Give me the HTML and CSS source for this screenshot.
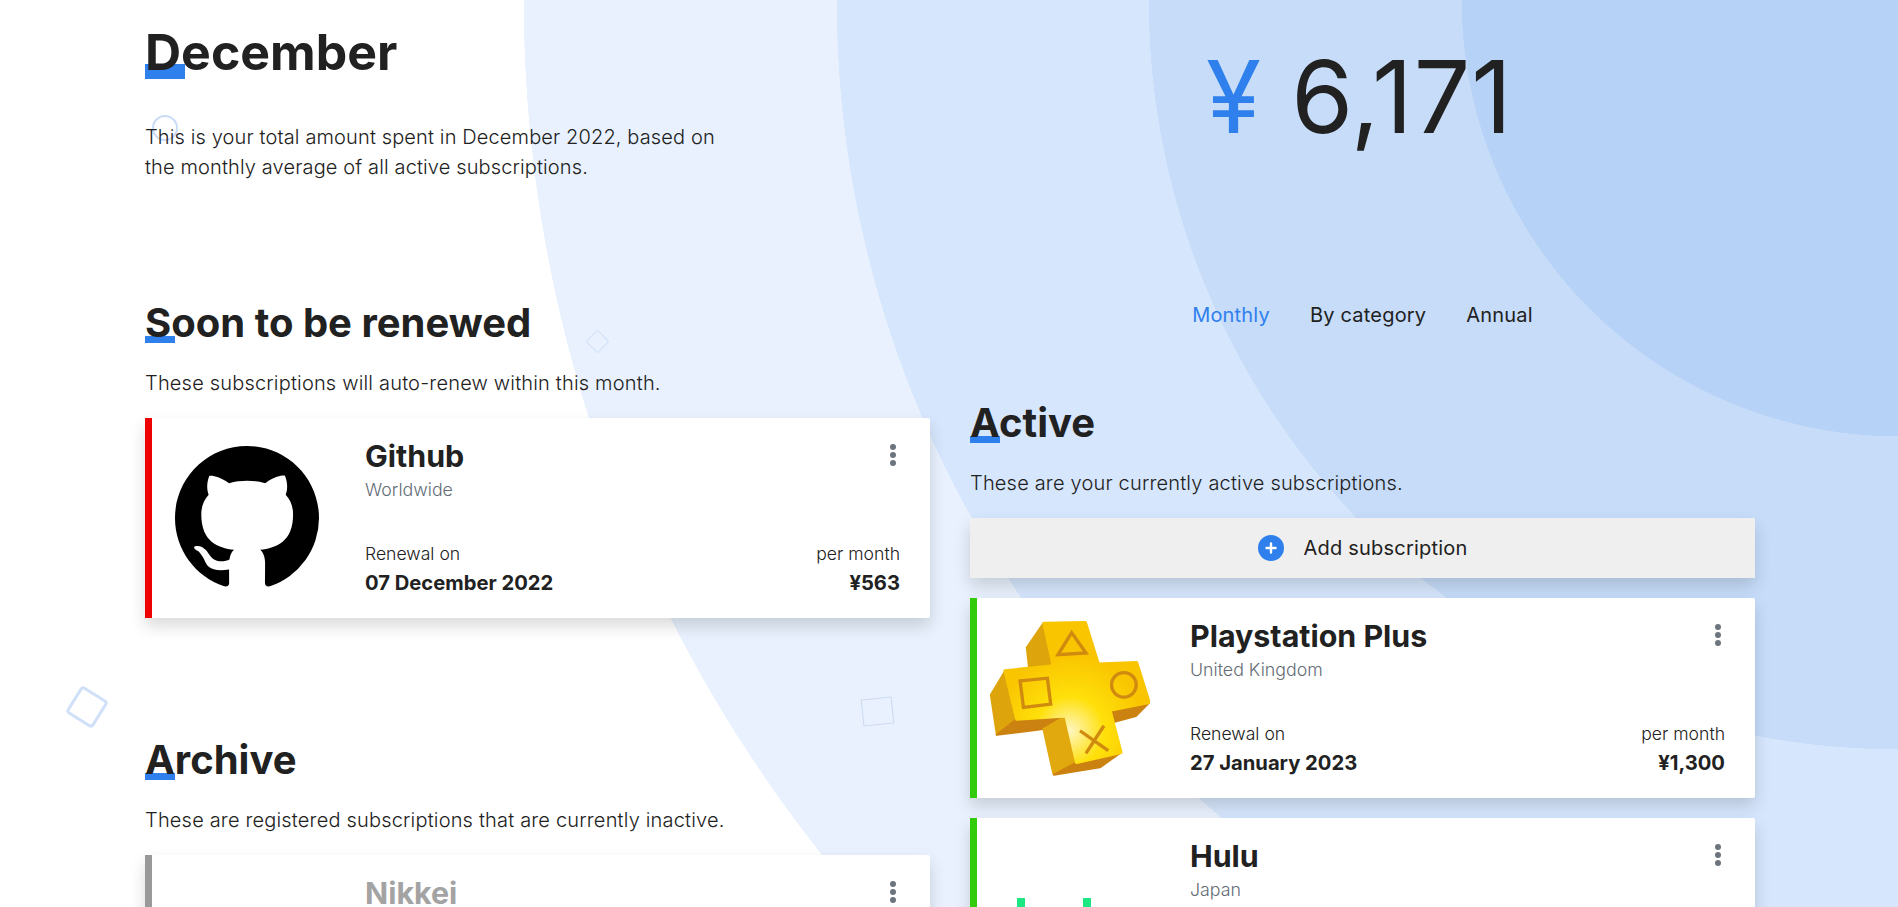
FILE: index.html
```html
<!DOCTYPE html>
<html lang="en">

<head>
    <meta charset="UTF-8">
    <meta name="viewport" content="width=device-width, initial-scale=1.0">
    <title>Subscriptions</title>
    <link rel="stylesheet" href="styles.css">
</head>

<body>
    <!-- floating shapes behind the content -->
    <span class="shape shape-circle"></span>
    <span class="shape shape-diamond"></span>
    <span class="shape shape-round"></span>
    <span class="shape shape-square"></span>

    <main class="page">
        <div class="col">
            <section class="hero">
                <h1 class="mark">December</h1>
                <p class="lead">This is your total amount spent in December 2022, based on the monthly average of all active subscriptions.</p>
            </section>

            <section class="renew">
                <h2 class="mark">Soon to be renewed</h2>
                <p class="sub">These subscriptions will auto-renew within this month.</p>
                <article class="card card-red">
                    <div class="logo">
                        <svg class="logo-github" viewBox="0 0 16 16" fill="#000">
                            <path d="M8 0C3.58 0 0 3.58 0 8c0 3.54 2.29 6.53 5.47 7.59.4.07.55-.17.55-.38 0-.19-.01-.82-.01-1.49-2.01.37-2.53-.49-2.69-.94-.09-.23-.48-.94-.82-1.13-.28-.15-.68-.52-.01-.53.63-.01 1.08.58 1.23.82.72 1.21 1.87.87 2.33.66.07-.52.28-.87.51-1.07-1.78-.2-3.64-.89-3.64-3.95 0-.87.31-1.59.82-2.15-.08-.2-.36-1.02.08-2.12 0 0 .67-.21 2.2.82.64-.18 1.32-.27 2-.27.68 0 1.36.09 2 .27 1.53-1.04 2.2-.82 2.2-.82.44 1.1.16 1.92.08 2.12.51.56.82 1.27.82 2.15 0 3.07-1.87 3.75-3.65 3.95.29.25.54.73.54 1.48 0 1.07-.01 1.93-.01 2.2 0 .21.15.46.55.38A8.013 8.013 0 0016 8c0-4.42-3.58-8-8-8z" />
                        </svg>
                    </div>
                    <div class="info">
                        <h3>Github</h3>
                        <div class="region">Worldwide</div>
                        <div class="meta">
                            <div>
                                <div class="label">Renewal on</div>
                                <div class="value">07 December 2022</div>
                            </div>
                            <div class="price">
                                <div class="label">per month</div>
                                <div class="value">¥563</div>
                            </div>
                        </div>
                    </div>
                    <svg class="dots" viewBox="0 0 8 24" fill="#6c757d">
                        <circle cx="4" cy="4" r="3" />
                        <circle cx="4" cy="12" r="3" />
                        <circle cx="4" cy="20" r="3" />
                    </svg>
                </article>
            </section>

            <section class="archive">
                <h2 class="mark">Archive</h2>
                <p class="sub">These are registered subscriptions that are currently inactive.</p>
                <article class="card card-gray">
                    <div class="logo"></div>
                    <div class="info">
                        <h3 class="muted">Nikkei</h3>
                    </div>
                    <svg class="dots" viewBox="0 0 8 24" fill="#6c757d">
                        <circle cx="4" cy="4" r="3" />
                        <circle cx="4" cy="12" r="3" />
                        <circle cx="4" cy="20" r="3" />
                    </svg>
                </article>
            </section>
        </div>

        <div class="col">
            <div class="total"><span class="yen">¥</span> 6,171</div>

            <nav class="tabs">
                <a class="active" href="#">Monthly</a>
                <a href="#">By category</a>
                <a href="#">Annual</a>
            </nav>

            <section class="active-list">
                <h2 class="mark">Active</h2>
                <p class="sub">These are your currently active subscriptions.</p>

                <button class="add">
                    <svg viewBox="0 0 26 26" width="26" height="26">
                        <circle cx="13" cy="13" r="13" fill="#2f80ed" />
                        <path d="M13 8.5v9M8.5 13h9" stroke="#fff" stroke-width="2.4" stroke-linecap="round" />
                    </svg>
                    Add subscription
                </button>

                <article class="card card-green">
                    <div class="logo">
                        <svg class="logo-ps" viewBox="90 90 480 466">
                            <defs>
                                <radialGradient id="psGlow" gradientUnits="userSpaceOnUse" cx="330" cy="420" r="230">
                                    <stop offset="0" stop-color="#fff6c0" />
                                    <stop offset="0.45" stop-color="#ffe00a" />
                                    <stop offset="1" stop-color="#f9c400" />
                                </radialGradient>
                            </defs>
                            <g stroke-linejoin="round">
                                <path d="M250 97 200 170 207 232 280 225Z" fill="#dda40c" stroke="#dda40c" stroke-width="6" />
                                <path d="M135 240 92 312 110 432 170 385Z" fill="#dda40c" stroke="#dda40c" stroke-width="6" />
                                <path d="M170 385 110 432 250 415 318 375Z" fill="#cc8210" stroke="#cc8210" stroke-width="6" />
                                <path d="M318 375 250 415 280 550 350 515Z" fill="#e2a90e" stroke="#e2a90e" stroke-width="6" />
                                <path d="M350 515 282 552 420 530 483 485Z" fill="#cc8210" stroke="#cc8210" stroke-width="6" />
                                <path d="M568 335 450 358 456 395 528 376Z" fill="#cc8210" stroke="#cc8210" stroke-width="6" />
                                <path d="M252 97 376 95 415 220 530 215 568 335 450 358 483 485 350 515 318 375 170 385 135 240 280 225Z" fill="url(#psGlow)" stroke="url(#psGlow)" stroke-width="10" />
                            </g>
                            <g fill="none" stroke="#d08a10" stroke-width="10">
                                <path d="M335 125 294 191 378 186Z" />
                                <path d="M180 270 262 262 272 340 190 350Z" />
                                <circle cx="492" cy="282" r="37" />
                                <path d="M360 420 445 480M432 405 378 488" />
                            </g>
                        </svg>
                    </div>
                    <div class="info">
                        <h3>Playstation Plus</h3>
                        <div class="region">United Kingdom</div>
                        <div class="meta">
                            <div>
                                <div class="label">Renewal on</div>
                                <div class="value">27 January 2023</div>
                            </div>
                            <div class="price">
                                <div class="label">per month</div>
                                <div class="value">¥1,300</div>
                            </div>
                        </div>
                    </div>
                    <svg class="dots" viewBox="0 0 8 24" fill="#6c757d">
                        <circle cx="4" cy="4" r="3" />
                        <circle cx="4" cy="12" r="3" />
                        <circle cx="4" cy="20" r="3" />
                    </svg>
                </article>

                <article class="card card-green">
                    <div class="logo">
                        <svg class="logo-hulu" viewBox="0 0 160 40" fill="#1ce783">
                            <rect x="25" y="0" width="8" height="40" />
                            <rect x="91" y="0" width="8" height="40" />
                        </svg>
                    </div>
                    <div class="info">
                        <h3>Hulu</h3>
                        <div class="region">Japan</div>
                    </div>
                    <svg class="dots" viewBox="0 0 8 24" fill="#6c757d">
                        <circle cx="4" cy="4" r="3" />
                        <circle cx="4" cy="12" r="3" />
                        <circle cx="4" cy="20" r="3" />
                    </svg>
                </article>
            </section>
        </div>
    </main>
</body>

</html>
```

FILE: styles.css
```css
* {
    box-sizing: border-box;
}

html,
body {
    height: 907px;
    margin: 0;
    overflow: hidden;
}

body {
    position: relative;
    font-family: Inter, "Liberation Sans", sans-serif;
    color: #212121;
    background: radial-gradient(circle at 100% 0,
            #b6d2f7 436px,
            #c6dcf9 436.5px 749px,
            #d6e6fc 749.5px 1061px,
            #e8f1fd 1061.5px 1374px,
            #fff 1374.5px);
}

.page {
    position: relative;
    display: grid;
    grid-template-columns: 785px 785px;
    column-gap: 40px;
    padding-left: 145px;
}

/* headings with the blue block under the first letter */
.mark {
    position: relative;
    z-index: 0;
    margin: 0;
    font-weight: 700;
    line-height: 1;
}

.mark::after {
    content: "";
    position: absolute;
    left: 0;
    z-index: -1;
    background: #2f80ed;
}

h1.mark {
    padding-top: 27px;
    font-size: 50px;
}

h1.mark::after {
    top: 64px;
    width: 40px;
    height: 15px;
}

h2.mark {
    font-size: 40px;
}

h2.mark::after {
    bottom: 0;
    width: 30px;
    height: 7px;
}

.lead {
    width: 580px;
    margin: 45px 0 0;
    font-size: 20px;
    font-weight: 300;
    line-height: 30px;
    letter-spacing: .13px;
}

.sub {
    margin: 25px 0 0;
    font-size: 20px;
    font-weight: 300;
    line-height: 30px;
    letter-spacing: .18px;
}

.renew {
    margin-top: 121px;
}

.archive {
    margin-top: 122px;
}

/* right column */
.total {
    margin-right: 6px;
    padding-top: 37px;
    font-size: 100px;
    font-weight: 400;
    line-height: 120px;
    letter-spacing: 1px;
    text-align: center;
}

.yen {
    color: #2f80ed;
}

.tabs {
    display: flex;
    justify-content: center;
    gap: 40px;
    margin-top: 143px;
    font-size: 20px;
    line-height: 30px;
    letter-spacing: .2px;
}

.tabs a {
    color: #212121;
    text-decoration: none;
}

.tabs a.active {
    color: #2f80ed;
}

.active-list {
    margin-top: 73px;
}

.add {
    display: flex;
    align-items: center;
    justify-content: center;
    gap: 20px;
    width: 100%;
    height: 60px;
    margin-top: 20px;
    border: 0;
    background: #efefef;
    box-shadow: 0 8px 16px rgba(0, 0, 0, .15);
    color: #212121;
    font: 400 20px Inter, sans-serif;
    letter-spacing: .2px;
}

/* subscription cards */
.card {
    position: relative;
    display: flex;
    height: 200px;
    margin-top: 20px;
    background: #fff;
    border-left: 7px solid #999;
    border-radius: 0 2px 2px 0;
    box-shadow: 0 8px 16px rgba(0, 0, 0, .15);
}

.card-red {
    border-left-color: #ee0000;
}

.card-green {
    border-left-color: #33cc0d;
}

.card-gray {
    border-left-color: #999;
}

.logo {
    display: flex;
    align-items: center;
    justify-content: center;
    flex: none;
    width: 189px;
    margin-right: 24px;
}

.logo-github {
    width: 144px;
    height: 144px;
}

.logo-ps {
    width: 160px;
    height: 155px;
    margin-right: 3px;
}

.logo-hulu {
    width: 160px;
    height: 40px;
}

.info {
    display: flex;
    flex: 1;
    flex-direction: column;
    padding: 19px 30px 0 0;
}

.info h3 {
    margin: 0;
    font-size: 30.4px;
    font-weight: 700;
    line-height: 38px;
}

.info h3.muted {
    color: #a3a3a3;
}

.region {
    margin-top: 3px;
    color: #646d75;
    font-size: 17.8px;
    font-weight: 300;
    line-height: 24px;
}

.meta {
    display: flex;
    justify-content: space-between;
    margin-top: 40px;
}

.label {
    font-size: 17.6px;
    font-weight: 300;
    line-height: 24px;
}

.value {
    margin-top: 3px;
    font-size: 20.2px;
    font-weight: 700;
    line-height: 28px;
}

.price {
    text-align: right;
}

.dots {
    position: absolute;
    top: 25px;
    right: 33px;
    width: 8px;
    height: 24px;
}

/* faint outlines floating on the page */
.shape {
    position: absolute;
    border-style: solid;
}

.shape-circle {
    left: 152px;
    top: 115px;
    width: 26px;
    height: 26px;
    border-width: 2px;
    border-color: #c9dcf7;
    border-radius: 50%;
}

.shape-diamond {
    left: 589px;
    top: 333px;
    width: 17px;
    height: 17px;
    border-width: 1px;
    border-color: #cfe0f8;
    border-radius: 2px;
    transform: rotate(45deg);
}

.shape-round {
    left: 71px;
    top: 691px;
    width: 32px;
    height: 32px;
    border-width: 3px;
    border-color: #cfe0f8;
    border-radius: 4px;
    transform: rotate(32deg);
}

.shape-square {
    left: 862px;
    top: 698px;
    width: 31px;
    height: 27px;
    border-width: 1px;
    border-color: #cbd9ef;
    transform: rotate(-6deg);
}
```
